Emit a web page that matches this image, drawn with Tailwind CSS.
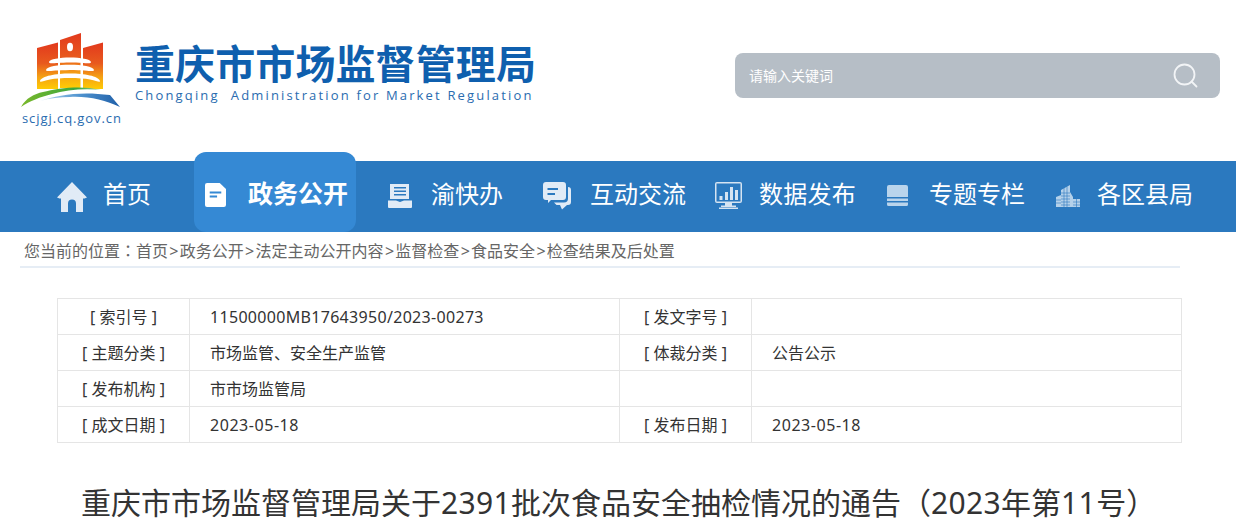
<!DOCTYPE html>
<html lang="zh-CN">
<head>
  <meta charset="UTF-8">
  <meta name="viewport" content="width=device-width, initial-scale=1.0">
  <title>重庆市市场监督管理局</title>
  <script src="https://cdn.jsdelivr.net/npm/@tailwindcss/browser@4"></script>
</head>
<body class="bg-white font-['Noto_Sans','Noto_Sans_CJK_SC',sans-serif] text-[#333] h-[531px] overflow-hidden">
  <!-- header -->
  <header class="h-[161px] flex items-start">
    <div class="ml-[20px] mt-[30px] w-[104px]">
      <svg width="102" height="80" viewBox="20 30 102 80" class="block">
        <defs>
          <linearGradient id="logoFill" x1="0" y1="0" x2="0" y2="1">
            <stop offset="0" stop-color="#e2391d"/>
            <stop offset="0.45" stop-color="#e85a1e"/>
            <stop offset="0.75" stop-color="#f5a313"/>
            <stop offset="1" stop-color="#fecb05"/>
          </linearGradient>
          <linearGradient id="logoBlue" x1="0" y1="0" x2="1" y2="0">
            <stop offset="0" stop-color="#b5d8ee"/>
            <stop offset="0.5" stop-color="#4f93cf"/>
            <stop offset="1" stop-color="#1f5fa8"/>
          </linearGradient>
          <linearGradient id="logoGreen" x1="0" y1="0" x2="1" y2="0">
            <stop offset="0" stop-color="#7ab82a"/>
            <stop offset="0.7" stop-color="#3aa63f"/>
            <stop offset="1" stop-color="#9fd0a0"/>
          </linearGradient>
        </defs>
        <path fill="url(#logoFill)" d="M37 48 58 42.500V89H37Z"/>
        <path fill="url(#logoFill)" d="M60 40 81 33V88H60Z"/>
        <path fill="url(#logoFill)" d="M83 48 103 42.500V89H83Z"/>
        <ellipse cx="70" cy="47" rx="3" ry="4.200" fill="#fff"/>
        <path fill="#fff" d="M49 62C50 56 90 56 91 62C91 64 88 63 70 62.500C52 63 49 64 49 62Z"/>
        <path fill="#fff" d="M46 70C47 63 93 63 94 70C94 72 90 70.500 70 70C50 70.500 46 72 46 70Z"/>
        <path fill="#fff" d="M40 81C43 71 97 71 100 81C100 83 97 81 90 79.500C80 77.500 60 77.500 50 79.500C43 81 40 83 40 81Z"/>
        <path fill="#fff" d="M58.500 60h1.500v29H58.500ZM80.500 60h1.500v29H80.500Z"/>
        <path fill="url(#logoGreen)" d="M21 107C26 98 34 94 43 92C58 88 82 85 101 90C84 88 66 90 52 94C40 97 30 101 21 107Z"/>
        <path fill="url(#logoBlue)" d="M40 101C58 95 80 91 110 95L120 107C105 100 88 96 70 97C60 97 50 98 40 101Z"/>
      </svg>
      <div class="ml-[2px] text-[13px] leading-[16px] tracking-[0.92px] text-[#2a6cb0] whitespace-nowrap font-['Open_Sans',sans-serif]">scjgj.cq.gov.cn</div>
    </div>
    <div class="ml-[11px] mt-[42px] w-[420px]">
      <div class="text-[40px] leading-[44px] font-bold text-[#0f5fae] whitespace-nowrap tracking-[0.1px]">重庆市市场监督管理局</div>
      <div class="text-[13px] leading-[18px] tracking-[2.16px] text-[#2a6cb0] whitespace-pre font-['Open_Sans',sans-serif]">Chongqing  Administration for Market Regulation</div>
    </div>
    <div class="ml-[180px] mt-[53px] w-[485px] h-[45px] rounded-lg bg-[#b6bec6] flex items-center justify-between pl-[14px] pr-[22px]">
      <span class="text-[14px] text-white">请输入关键词</span>
      <svg width="25" height="25" viewBox="0 0 25 25" fill="none" stroke="#f2f4f6" stroke-width="1.800">
        <circle cx="11.500" cy="11.500" r="10"/>
        <path d="M18.500 18.500 23.500 23.500" stroke-linecap="round"/>
      </svg>
    </div>
  </header>

  <!-- nav -->
  <nav class="h-[71px] bg-[#2b79bf] flex items-start pl-[56px] text-white text-[24px] whitespace-nowrap">
    <div class="flex items-center w-[96px] h-[66px]">
      <svg width="32" height="32" viewBox="0 0 32 32" class="mr-[15px] shrink-0 mt-[5px]" fill="#e1ebf6">
        <path d="M16 1 31 16.500 28.500 17.500H27V31H20V22.500A4 4 0 0 0 12 22.500V31H5V17.500H3.500L1 16.500Z"/>
      </svg>
      <span>首页</span>
    </div>
    <div class="ml-[42px] mt-[-9px] w-[162px] h-[80px] shrink-0 bg-[#3589d4] rounded-[12px] flex items-center pl-[11px] pt-[4px] font-bold text-[25px]">
      <svg width="21" height="24" viewBox="0 0 20 24" preserveAspectRatio="none" class="mr-[22px] shrink-0 mt-[2px]">
        <path fill="#fff" d="M2 0H14L20 6V22a2 2 0 0 1-2 2H2a2 2 0 0 1-2-2V2A2 2 0 0 1 2 0Z"/>
        <path fill="#3589d4" d="M4.500 8.500h11v2h-11ZM4.500 12.500h7v2h-7Z"/>
      </svg>
      <span>政务公开</span>
    </div>
    <div class="flex items-center h-[66px] ml-[32px] w-[116px]">
      <svg width="24" height="24" viewBox="0 0 24 24" class="mr-[19px] shrink-0 mt-[3px]" fill="#e1ebf6">
        <path d="M2 0H21V15H2ZM6 3V4.500H18V3ZM6 6.500V8H18V6.500ZM6 10V11.500H18V10Z" fill-rule="evenodd"/>
        <path d="M0 16.500H8L12 18 16 16.500H24V23a1 1 0 0 1-1 1H1a1 1 0 0 1-1-1Z"/>
      </svg>
      <span>渝快办</span>
    </div>
    <div class="flex items-center h-[66px] ml-[39px] w-[143px]">
      <svg width="29" height="28" viewBox="0 0 29 28" class="mr-[18px] shrink-0 mt-[3px]" fill="#e1ebf6">
        <path fill-rule="evenodd" d="M3 0H20a3 3 0 0 1 3 3V15a3 3 0 0 1-3 3H8L5 21V18H3a3 3 0 0 1-3-3V3A3 3 0 0 1 3 0ZM4.500 6V8H15V6ZM4.500 11V13H12V11Z"/>
        <path d="M25 5a3 3 0 0 1 3 3V20a3 3 0 0 1-3 3H24L19 27.500 17 23H13.500L11 20.500H21a4 4 0 0 0 4-4Z"/>
      </svg>
      <span>互动交流</span>
    </div>
    <div class="flex items-center h-[66px] ml-[29px] w-[141px]">
      <svg width="27" height="27" viewBox="0 0 27 27" class="mr-[17px] shrink-0 mt-[3px]" fill="#d5e4f2">
        <path fill-rule="evenodd" d="M2 0H25a2 2 0 0 1 2 2V19a2 2 0 0 1-2 2H2a2 2 0 0 1-2-2V2A2 2 0 0 1 2 0ZM1.500 1.500V19.500H25.500V1.500Z"/>
        <path d="M4.500 14H7.500V18H4.500ZM10 10H13V18H10ZM15 5H18V18H15ZM20 8H23V18H20ZM10 21H17V23.500H21V25H6V23.500H10ZM4 25.500H23V27H4Z"/>
      </svg>
      <span class="tracking-[0.25px]">数据发布</span>
    </div>
    <div class="flex items-center h-[66px] ml-[31px] w-[139px]">
      <svg width="21" height="21" viewBox="0 0 21 21" class="mr-[21px] shrink-0 mt-[3px]" fill="#b9d4ec">
        <path d="M2 0H19a2 2 0 0 1 2 2V12H0V2A2 2 0 0 1 2 0ZM0 13.500H21V16H0ZM0 17.500H21V19.500A1.500 1.500 0 0 1 19.500 21H1.500A1.500 1.500 0 0 1 0 19.500Z"/>
      </svg>
      <span>专题专栏</span>
    </div>
    <div class="flex items-center h-[66px] ml-[30px] w-[137px]">
      <svg width="24" height="22" viewBox="0 0 24 22" class="mr-[17px] shrink-0 mt-[4px]">
        <path fill="#b4d1ea" d="M0 12 5 10V22H0ZM5 5 14 0V22H5ZM14 7 17 12V22H14ZM17 14H24V22H17Z"/>
        <path fill="none" stroke="#2b79bf" stroke-width="0.600" d="M5 8H14M5 11H14M5 14H14M5 17H14M5 20H14M8 3V22M11 1.500V22M0 15H5M0 18H5M17 17H24M17 20H24M20.500 14V22"/>
      </svg>
      <span>各区县局</span>
    </div>
  </nav>

  <!-- breadcrumb -->
  <div class="ml-[20px] w-[1160px] h-[36px] pl-[4px] border-b-2 border-[#e6edf5] text-[16px] leading-[37px] text-[#666] whitespace-nowrap">您当前的位置<span lang="zh-TW" class="font-['Noto_Sans_CJK_TC',sans-serif]">：</span>首页<span class="px-[1.3px]">&gt;</span>政务公开<span class="px-[1.3px]">&gt;</span>法定主动公开内容<span class="px-[1.3px]">&gt;</span>监督检查<span class="px-[1.3px]">&gt;</span>食品安全<span class="px-[1.3px]">&gt;</span>检查结果及后处置</div>

  <!-- info table -->
  <table class="ml-[57px] mt-[30px] w-[1125px] table-fixed border-collapse text-[16px] text-[#333]">
    <colgroup>
      <col class="w-[132px]"><col class="w-[430px]"><col class="w-[132px]"><col>
    </colgroup>
    <tbody>
      <tr class="h-[36px]">
        <td class="border border-[#e5e5e5] text-center">[ 索引号 ]</td>
        <td class="border border-[#e5e5e5] pl-[20px] tracking-[0.31px]">11500000MB17643950/2023-00273</td>
        <td class="border border-[#e5e5e5] text-center">[ 发文字号 ]</td>
        <td class="border border-[#e5e5e5] pl-[20px]"></td>
      </tr>
      <tr class="h-[36px]">
        <td class="border border-[#e5e5e5] text-center">[ 主题分类 ]</td>
        <td class="border border-[#e5e5e5] pl-[20px]">市场监管、安全生产监管</td>
        <td class="border border-[#e5e5e5] text-center">[ 体裁分类 ]</td>
        <td class="border border-[#e5e5e5] pl-[20px]">公告公示</td>
      </tr>
      <tr class="h-[36px]">
        <td class="border border-[#e5e5e5] text-center">[ 发布机构 ]</td>
        <td class="border border-[#e5e5e5] pl-[20px]">市市场监管局</td>
        <td class="border border-[#e5e5e5]"></td>
        <td class="border border-[#e5e5e5]"></td>
      </tr>
      <tr class="h-[36px]">
        <td class="border border-[#e5e5e5] text-center">[ 成文日期 ]</td>
        <td class="border border-[#e5e5e5] pl-[20px] tracking-[0.55px]">2023-05-18</td>
        <td class="border border-[#e5e5e5] text-center">[ 发布日期 ]</td>
        <td class="border border-[#e5e5e5] pl-[20px] tracking-[0.55px]">2023-05-18</td>
      </tr>
    </tbody>
  </table>

  <h1 class="mt-[36px] ml-[81px] text-[30px] leading-[44px] font-normal text-[#333] whitespace-nowrap">重庆市市场监督管理局关于<span class="tracking-[0.35px]">2391</span>批次食品安全抽检情况的通告<span lang="zh-TW" class="font-['Noto_Sans_CJK_TC',sans-serif]">（</span><span class="tracking-[0.35px]">2023</span>年第<span class="tracking-[0.35px]">11</span>号<span lang="zh-TW" class="font-['Noto_Sans_CJK_TC',sans-serif]">）</span></h1>
</body>
</html>
